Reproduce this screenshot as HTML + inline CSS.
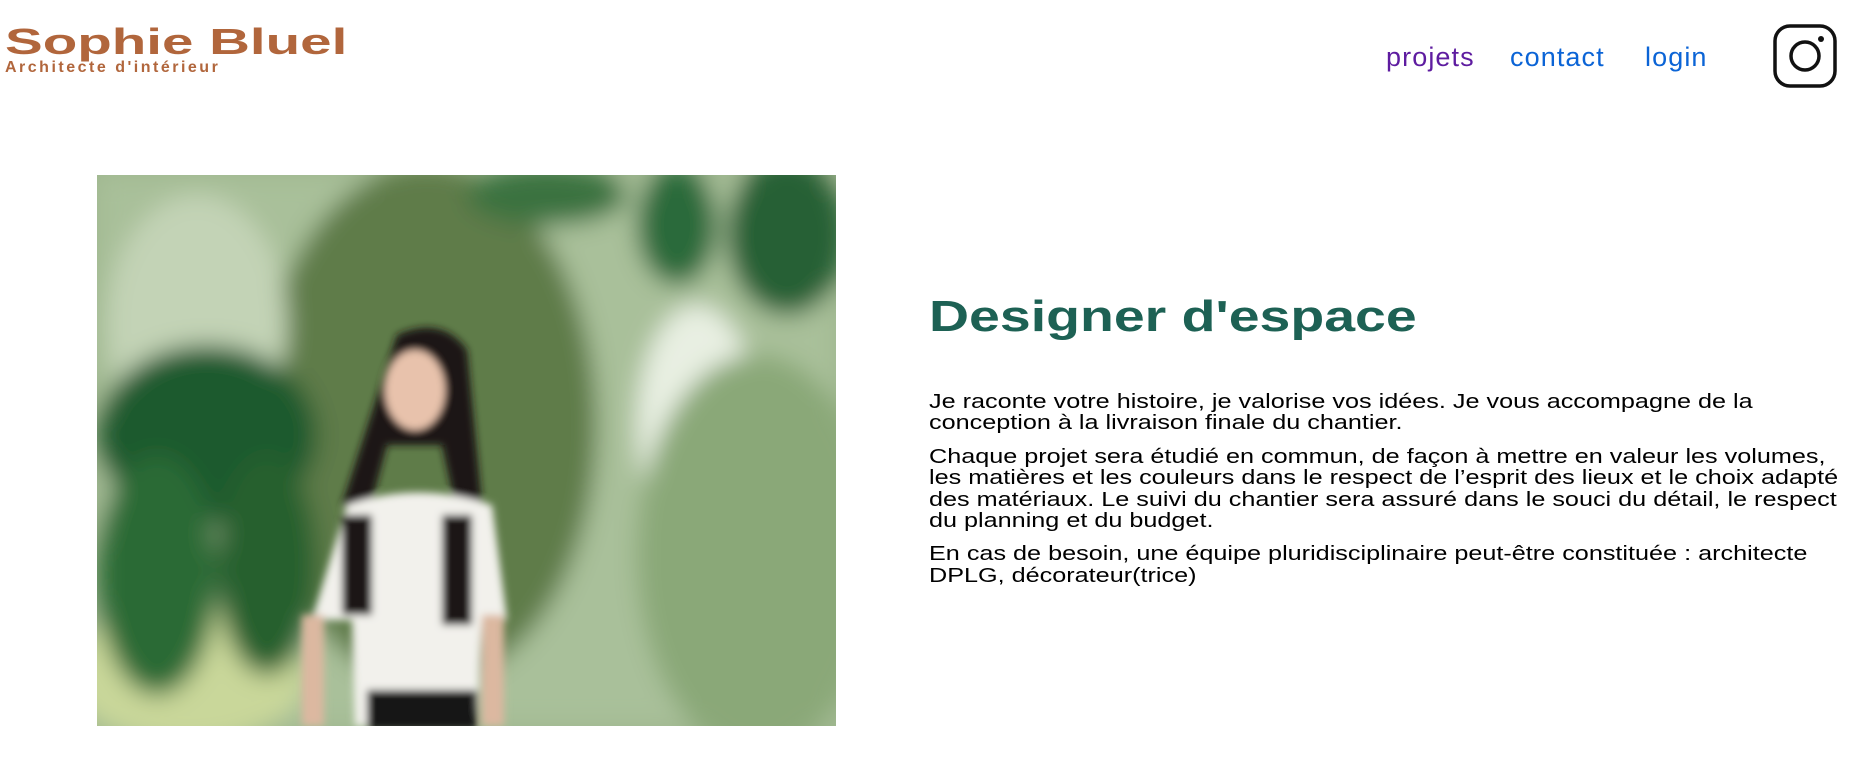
<!DOCTYPE html>
<html><head><meta charset="utf-8"><style>
*{margin:0;padding:0;box-sizing:border-box}
body{width:1863px;height:758px;background:#fff;position:relative;overflow:hidden;font-family:"Liberation Sans",sans-serif}
.logo{position:absolute;left:5px;top:22px;color:#B1663C}
.logo h1{font-size:36px;font-weight:700;transform:scaleX(1.57);transform-origin:left;white-space:nowrap;line-height:40px}
.logo p{font-size:16px;font-weight:700;letter-spacing:2.5px;margin-top:-3px}
nav a{position:absolute;top:42px;font-size:27px;letter-spacing:1.1px;text-decoration:none;line-height:30px}
.ig{position:absolute;left:1773px;top:24px}
.img{position:absolute;left:97px;top:175px;width:739px;height:551px;overflow:hidden}
h2{position:absolute;left:929px;top:292px;font-size:44px;color:#1D6154;font-weight:700;transform:scaleX(1.26);transform-origin:left;white-space:nowrap}
.txt{position:absolute;left:929px;top:392px;width:757px;font-size:20px;line-height:21.4px;color:#000;transform:scaleX(1.26);transform-origin:left top;white-space:nowrap}
.txt p{margin-bottom:12px}
</style></head><body>
<div class="logo"><h1>Sophie Bluel</h1><p>Architecte d'intérieur</p></div>
<nav><a style="left:1386px;color:#5E1CA0">projets</a><a style="left:1510px;color:#0B64D6">contact</a><a style="left:1645px;color:#0B64D6">login</a></nav>
<svg class="ig" width="64" height="64" viewBox="0 0 64 64"><rect x="2" y="2" width="60" height="60" rx="15" fill="none" stroke="#111" stroke-width="3.5"/><circle cx="32" cy="32" r="14" fill="none" stroke="#111" stroke-width="3.5"/><circle cx="48" cy="15" r="3" fill="#111"/></svg>
<div class="img"><svg width="739" height="551" viewBox="0 0 739 551">
<defs><filter id="b"><feGaussianBlur stdDeviation="12"/></filter><filter id="b2"><feGaussianBlur stdDeviation="4"/></filter></defs>
<rect width="739" height="551" fill="#9fb78f"/>
<g filter="url(#b)">
<rect x="0" y="0" width="739" height="551" fill="#a9c09a"/>
<ellipse cx="330" cy="250" rx="170" ry="260" fill="#5f7c48"/>
<ellipse cx="600" cy="250" rx="60" ry="120" fill="#e8efe2"/>
<ellipse cx="660" cy="380" rx="120" ry="200" fill="#8aa878"/>
<ellipse cx="100" cy="150" rx="90" ry="130" fill="#c3d3b6"/>
<ellipse cx="90" cy="500" rx="120" ry="70" fill="#c9d79a"/>
<ellipse cx="110" cy="260" rx="110" ry="90" fill="#1f5a2e"/>
<ellipse cx="60" cy="400" rx="60" ry="120" fill="#2c6a36"/>
<ellipse cx="170" cy="390" rx="50" ry="110" fill="#27602f"/>
<ellipse cx="580" cy="50" rx="40" ry="60" fill="#2b6a3a"/>
<ellipse cx="690" cy="60" rx="60" ry="80" fill="#276036"/>
<ellipse cx="450" cy="20" rx="80" ry="30" fill="#3a7241"/>
</g>
<g filter="url(#b2)">
<path d="M300 160 Q345 140 370 175 L385 330 L360 340 L345 270 L290 270 L270 345 L245 330 Z" fill="#1a1412"/>
<ellipse cx="318" cy="215" rx="30" ry="40" fill="#e8c2ac"/>
<path d="M250 330 Q320 305 395 330 L410 445 L385 445 L380 545 L258 551 L255 445 L215 445 Z" fill="#f2f1ec"/>
<rect x="245" y="340" width="30" height="100" fill="#1a1412"/>
<rect x="345" y="340" width="30" height="110" fill="#1a1412"/>
<rect x="270" y="515" width="110" height="40" fill="#121414"/>
<rect x="205" y="440" width="22" height="111" fill="#dcb8a0"/>
<rect x="385" y="440" width="22" height="111" fill="#dcb8a0"/>
</g>
</svg></div>
<h2>Designer d'espace</h2>
<div class="txt">
<p>Je raconte votre histoire, je valorise vos idées. Je vous accompagne de la<br>conception à la livraison finale du chantier.</p>
<p>Chaque projet sera étudié en commun, de façon à mettre en valeur les volumes,<br>les matières et les couleurs dans le respect de l’esprit des lieux et le choix adapté<br>des matériaux. Le suivi du chantier sera assuré dans le souci du détail, le respect<br>du planning et du budget.</p>
<p>En cas de besoin, une équipe pluridisciplinaire peut-être constituée : architecte<br>DPLG, décorateur(trice)</p>
</div>
</body></html>
